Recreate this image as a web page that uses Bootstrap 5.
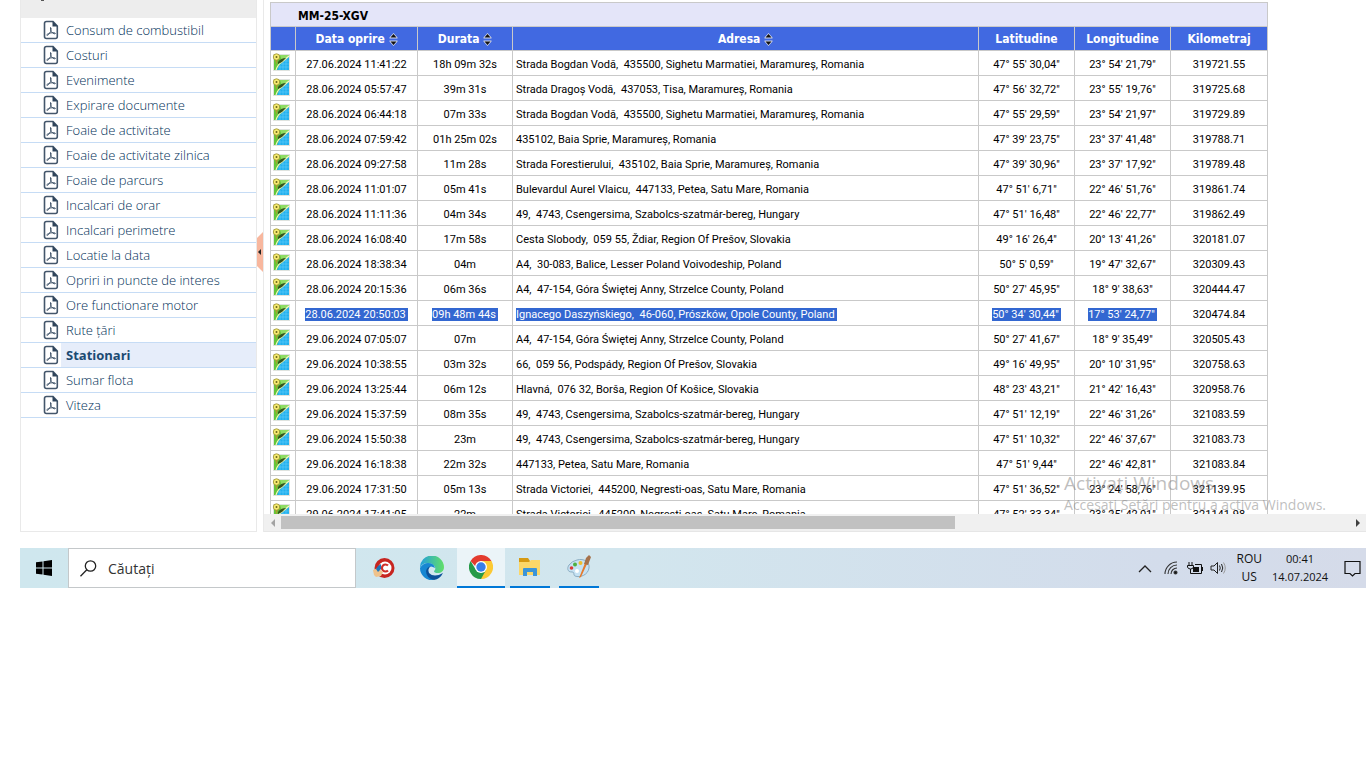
<!DOCTYPE html>
<html lang="ro">
<head>
<meta charset="utf-8">
<meta name="viewport" content="width=device-width, initial-scale=1">
<title>Stationari</title>
<link href="https://cdn.jsdelivr.net/npm/bootstrap@5.3.0/dist/css/bootstrap.min.css" rel="stylesheet">
<style>
body{font-family:"Open Sans","Noto Sans",sans-serif;font-size:13px;background:#fff;overflow-x:hidden}
.workspace{height:532px;padding-left:20px}
.sidebar{width:237px;border:1px solid #e9e9e9;border-top:0}
.side-head{height:18px;background:#ededed;padding-left:20px}
.side-head i{display:block;width:3px;height:1px;background:#555}
.reports a{display:flex;align-items:stretch;height:25px;border-bottom:1px solid #c6dcf5;color:#003058;text-decoration:none;line-height:24px;padding-left:22px;font-weight:300}
.reports svg{width:16px;height:20px;margin-top:2px;flex:none}
.reports span{flex:1;margin-left:2px;padding-left:5px}
.reports .current span{background:#e6edfa;font-weight:700;color:#1b4a72}
.splitter{width:7px;border-right:1px solid #e9e9e9;padding-top:232px}
.splitter button{display:block;border:0;padding:0;background:none;width:6px;height:40px}
.splitter svg{display:block}
.viewport{overflow:hidden;min-height:0;padding:2px 0 0 6px}
.stops{font-family:Roboto,"Liberation Sans",sans-serif;font-size:11px;line-height:14px;border-collapse:collapse;table-layout:fixed;width:998px;color:#000;text-align:center;white-space:pre}
.stops th,.stops td{border:1px solid #c9c9c9;padding:0;height:25px;vertical-align:middle}
.stops td{padding-top:3px}
.stops td:first-child{padding-top:0}
.stops thead th{height:24px;font-family:"DejaVu Sans Condensed","DejaVu Sans",sans-serif;font-size:12px}
.stops .vehicle th{background:#e4e5f9;text-align:left;padding:2px 0 0 27px}
.stops .heads th{background:#4169e1;color:#fff;text-align:center}
.stops td:nth-child(5n+4){text-align:left;padding-left:3px}
.stops td svg{display:block;margin-left:1px;margin-bottom:3px}
.stops .picked{background:#3367d1;color:#fff;padding:0 2px 0 0}
.hbar{height:18px;background:#f0f0f0;border-bottom:1px solid #e6e6e6}
.hbar button{border:0;background:none;padding:0;width:17px;height:17px;display:flex;align-items:center;justify-content:center}
.hbar .thumb{width:63.1%;height:13px;background:#c1c1c1;margin-top:2px}
.notice{position:absolute;right:40px;bottom:17px;color:rgba(125,125,125,.5);pointer-events:none;white-space:nowrap}
.notice .big{font-size:19px;line-height:24px}
.notice .sub{font-size:14px;line-height:20px}
.taskbar{margin:16px 0 0 20px;height:40px;background:linear-gradient(90deg,#cfe7ee,#d2e6ee 45%,#d3dceb 85%,#d5dbe9);color:#111}
.taskbar button{border:0;background:none;padding:0;display:flex;align-items:center;justify-content:center;height:40px;color:#111}
.start{width:48px}
.finder{width:288px;border:1px solid #c4c8ca;background:#fff;height:40px;padding-left:11px}
.finder input{border:0;outline:0;background:none;font-size:14px;color:#333;width:200px;padding:0;margin-left:11px}
.finder input::placeholder{color:#333;opacity:1}
.app{width:48px}
.taskbar .open{border-bottom:2px solid #0078d7;width:40px}
.taskbar .front{width:48px;margin-left:1px;background:#ebf4f8}
.tray{font-size:12px;line-height:18px;text-align:center}
.clock{width:56px;font-size:11px}
</style>
</head>
<body>
<svg width="0" height="0" class="position-absolute" aria-hidden="true">
<defs>
<symbol id="pdf" viewBox="0 0 16 20"><path d="M3.500 1.500H10L14.300 6V16.500Q14.300 18.500 12.500 18.500H3.500Q1.500 18.500 1.500 16.500V3.500Q1.500 1.500 3.500 1.500Z" fill="#fff" stroke="#43566b" stroke-width="1.600"/><path d="M9.500 1V6.500H15Z" fill="#2f445b"/><path d="M7.500 7.500C8.500 7.500 8 10 7.500 11.500C6.500 14 4.500 16 3.800 15.200C3.500 13.800 8.500 12.300 11.500 12.800C13 13.200 12.500 14.300 11 13.700C9 13 7 10.500 7.500 7.500Z" fill="none" stroke="#43566b"/></symbol>
<symbol id="map" viewBox="0 0 18 18"><path d="M1 1H18V18H1Z" fill="#dfe3df"/><path d="M2 2H17V17H2Z" fill="#62c63a"/><path d="M8 2H17V5L10 8Z" fill="#8fdc63"/><path d="M17 4V17H5Q7 11 12 8Z" fill="#22b0ee"/><path d="M8 17V12M11 17V9M14 17V6M6 14H17M9 11H17M12 8H17" stroke="#6fd2fa" stroke-width=".5"/><path d="M4 17Q6 11 10 9L17 3" fill="none" stroke="#f2f7c9" stroke-width="1.200"/><path d="M6 9Q9 5 14 5Q11 9 6 11Z" fill="#35531d"/><path d="M4.500 12L3 6H6Z" fill="#a99e32"/><circle cx="4.500" cy="4" r="3.200" fill="#f6ec70" stroke="#9a8f30" stroke-width=".8"/><circle cx="4.500" cy="4" r="1" fill="#6b641c"/></symbol>
<symbol id="sort" viewBox="0 0 9 13"><path d="M4.500 0L8.500 4.500V5.500H.5V4.500ZM4.500 13L.5 8.500V7.500H8.500V8.500Z" fill="#d3d8ea"/><path d="M4.500 1L7.500 4.500H1.500ZM4.500 12L1.500 8.500H7.500Z" fill="#111"/></symbol>
</defs>
</svg>

<div class="workspace d-flex">
<nav class="sidebar flex-shrink-0" aria-label="Rapoarte">
<div class="side-head"><i></i></div>
<div class="reports">
<a href="#"><svg><use href="#pdf"/></svg><span>Consum de combustibil</span></a>
<a href="#"><svg><use href="#pdf"/></svg><span>Costuri</span></a>
<a href="#"><svg><use href="#pdf"/></svg><span>Evenimente</span></a>
<a href="#"><svg><use href="#pdf"/></svg><span>Expirare documente</span></a>
<a href="#"><svg><use href="#pdf"/></svg><span>Foaie de activitate</span></a>
<a href="#"><svg><use href="#pdf"/></svg><span>Foaie de activitate zilnica</span></a>
<a href="#"><svg><use href="#pdf"/></svg><span>Foaie de parcurs</span></a>
<a href="#"><svg><use href="#pdf"/></svg><span>Incalcari de orar</span></a>
<a href="#"><svg><use href="#pdf"/></svg><span>Incalcari perimetre</span></a>
<a href="#"><svg><use href="#pdf"/></svg><span>Locatie la data</span></a>
<a href="#"><svg><use href="#pdf"/></svg><span>Opriri in puncte de interes</span></a>
<a href="#"><svg><use href="#pdf"/></svg><span>Ore functionare motor</span></a>
<a href="#"><svg><use href="#pdf"/></svg><span>Rute țări</span></a>
<a href="#" class="current"><svg><use href="#pdf"/></svg><span>Stationari</span></a>
<a href="#"><svg><use href="#pdf"/></svg><span>Sumar flota</span></a>
<a href="#"><svg><use href="#pdf"/></svg><span>Viteza</span></a>
</div>
</nav>
<div class="splitter flex-shrink-0"><button type="button" aria-label="Ascunde"><svg width="6" height="40"><path d="M0 0L6 6V34L0 40Z" fill="#f8b79e" transform="matrix(-1 0 0 1 6 0)"/><path d="M4 17V23L1 20Z" fill="#222"/></svg></button></div>
<main class="flex-fill d-flex flex-column position-relative overflow-hidden">
<div class="viewport flex-grow-1">
<table class="stops">
<colgroup><col style="width:25px"><col style="width:122px"><col style="width:95px"><col style="width:466px"><col style="width:96px"><col style="width:96px"><col style="width:97px"></colgroup>
<thead>
<tr class="vehicle"><th colspan="7">MM-25-XGV</th></tr>
<tr class="heads"><th></th><th>Data oprire <svg width="9" height="13"><use href="#sort"/></svg></th><th>Durata <svg width="9" height="13"><use href="#sort"/></svg></th><th>Adresa <svg width="9" height="13"><use href="#sort"/></svg></th><th>Latitudine</th><th>Longitudine</th><th>Kilometraj</th></tr>
</thead>
<tbody id="rows"></tbody>
</table>
</div>
<div class="hbar d-flex flex-shrink-0"><button type="button" aria-label="Stânga"><svg width="6" height="8"><path d="M5 0V8L1 4Z" fill="#a3a3a3"/></svg></button><div class="flex-grow-1"><div class="thumb"></div></div><button type="button" aria-label="Dreapta"><svg width="6" height="8"><path d="M1 0V8L5 4Z" fill="#404040"/></svg></button></div>
<div class="notice"><div class="big">Activați Windows</div><div class="sub">Accesați Setări pentru a activa Windows.</div></div>
</main>
</div>

<footer class="taskbar d-flex">
<button type="button" class="start" aria-label="Start"><svg width="16" height="16"><path d="M0 2.300L6.500 1.400V7.500H0ZM7.500 1.200L16 0V7.500H7.500ZM0 8.500H6.500V14.600L0 13.700ZM7.500 8.500H16V16L7.500 14.800Z"/></svg></button>
<label class="finder d-flex align-items-center"><svg width="17" height="17" fill="none" stroke="#222" stroke-width="1.300"><circle cx="10.500" cy="6" r="5.200"/><path d="M6.800 9.800L.5 16.200"/></svg><input type="search" placeholder="Căutați" aria-label="Căutați"></label>
<div class="d-flex ps-1">
<button type="button" class="app" aria-label="CCleaner"><svg width="22" height="22" viewBox="0 0 22 22"><circle cx="11.500" cy="11" r="10" fill="#c72520"/><circle cx="12" cy="11" r="6.500" fill="#fff"/><path d="M15 8.600A3.500 3.500 0 1 0 15 13.400" fill="none" stroke="#cf302a" stroke-width="2.200"/><path d="M0 13L5 11L10 15L8 19L3 20L1 18Z" fill="#efc28b"/><path d="M5 9L8 7V12L5 15L3 12Z" fill="#1e77bd"/></svg></button>
<button type="button" class="app" aria-label="Edge"><svg width="24" height="24" viewBox="0 0 24 24"><defs><linearGradient id="ea"><stop stop-color="#239fdd"/><stop offset="1" stop-color="#62df67"/></linearGradient></defs><path d="M0 12A12 12 0 0 1 24 11C24 15 21 17 18 17Q14 17 14 15Q16 14 15 11Q13 7 8 7Q2 7 0 12Z" fill="url(#ea)"/><path d="M0 12Q3 7 8 7Q14 7 15 12Q9 8 8 14Q8 19 14 24A12 12 0 0 1 0 12Z" fill="#1687d2"/><path d="M11 10Q7 13 9 17Q14 22 23 17Q20 23 14 24Q6 22 6 15Q7 11 11 10Z" fill="#0c5199"/></svg></button>
<button type="button" class="open front" aria-label="Chrome"><svg width="24" height="24" viewBox="0 0 24 24"><path d="M12 12L22.400 6A12 12 0 0 1 12 24Z" fill="#fcc934"/><path d="M12 12L17 15L12 24A12 12 0 0 1 1.600 6L7 15Z" fill="#269a48"/><path d="M12 6H22.400V12H12Z" fill="#fcc934"/><path d="M1.600 6A12 12 0 0 1 22.400 6H12L7 12Z" fill="#e33b2e"/><circle cx="12" cy="12" r="6" fill="#fff"/><circle cx="12" cy="12" r="4.700" fill="#377eea"/></svg></button>
<button type="button" class="open" style="margin-left:5px" aria-label="Explorer"><svg width="22" height="20" viewBox="0 0 22 20"><path d="M0 1H9L11 4V8H0Z" fill="#d69a12"/><path d="M0 5H10L12 3H21V18H0Z" fill="#fbd768"/><path d="M4 19V12Q4 11 5 11H17Q18 11 18 12V19H14V15H8V19Z" fill="#3b95d8"/></svg></button>
<button type="button" class="open" style="margin-left:9px" aria-label="Paint"><svg width="24" height="24" viewBox="0 0 24 24"><path d="M10 5C17 3 23 7 22 13C21 20 13 23 8 21C6 20 8 17 5 17C0 17 0 13 2 10Q5 6 10 5Z" fill="#c6e2f3" stroke="#8badc2"/><circle cx="4.500" cy="13" r="1.800" fill="#dd3838"/><circle cx="8" cy="9.500" r="2" fill="#4eaf42"/><circle cx="13.500" cy="8" r="2" fill="#efbd2d"/><circle cx="10" cy="16" r="2" fill="#fff"/><path d="M12 23L18 8L20 9L14 22Z" fill="#e47a2d"/><path d="M17 9L19 3L22 0L24 2L21 10Z" fill="#a5714a"/></svg></button>
</div>
<div class="tray ms-auto d-flex align-items-center">
<button type="button" aria-label="Pictograme ascunse"><svg width="14" height="9" fill="none" stroke="#222" stroke-width="1.300"><path d="M1 8L7 2L13 8"/></svg></button>
<svg class="me-1" style="margin-left:12px" width="15" height="14" fill="none" stroke="#333" stroke-width="1.100"><path d="M1 13A12 12 0 0 1 13 1M4 13A9 9 0 0 1 13 4M7 13A6 6 0 0 1 13 7" /><circle cx="11.500" cy="11.500" r="1.500" fill="#111"/></svg>
<svg class="ms-1" width="17" height="13" fill="none" stroke="#111"><path d="M2 0V3M5 0V3M.5 3.500H6.500V5Q6 7 3.500 7Q1 7 .5 5ZM3.500 7V11.500H14.500V2.500H8M15.500 5V9"/><path d="M6 5H12V10H6Z" fill="#111" stroke="none"/></svg>
<svg style="margin-left:6px" width="18" height="14" fill="none" stroke="#222"><path d="M1 5H4L7.500 1.500V12.500L4 9H1ZM9.500 4.500Q11 7 9.500 9.500M11.500 3Q14 7 11.500 11"/><path d="M13.500 1.500Q17 7 13.500 12.500" stroke="#999"/></svg>
<div style="margin-left:9px">ROU<br>US</div>
<div class="clock" style="margin-left:10px">00:41<br>14.07.2024</div>
<button type="button" style="margin:0 5px 0 16px" aria-label="Notificări"><svg width="17" height="17" fill="none" stroke="#111" stroke-width="1.200"><path d="M1 1.500H16V13.500H11L8.500 16L6 13.500H1Z"/></svg></button>
</div>
</footer>

<script>
const stops = [
["27.06.2024 11:41:22","18h 09m 32s","Strada Bogdan Vodă,  435500, Sighetu Marmatiei, Maramureș, Romania","47° 55' 30,04\"","23° 54' 21,79\"","319721.55"],
["28.06.2024 05:57:47","39m 31s","Strada Dragoș Vodă,  437053, Tisa, Maramureș, Romania","47° 56' 32,72\"","23° 55' 19,76\"","319725.68"],
["28.06.2024 06:44:18","07m 33s","Strada Bogdan Vodă,  435500, Sighetu Marmatiei, Maramureș, Romania","47° 55' 29,59\"","23° 54' 21,97\"","319729.89"],
["28.06.2024 07:59:42","01h 25m 02s","435102, Baia Sprie, Maramureș, Romania","47° 39' 23,75\"","23° 37' 41,48\"","319788.71"],
["28.06.2024 09:27:58","11m 28s","Strada Forestierului,  435102, Baia Sprie, Maramureș, Romania","47° 39' 30,96\"","23° 37' 17,92\"","319789.48"],
["28.06.2024 11:01:07","05m 41s","Bulevardul Aurel Vlaicu,  447133, Petea, Satu Mare, Romania","47° 51' 6,71\"","22° 46' 51,76\"","319861.74"],
["28.06.2024 11:11:36","04m 34s","49,  4743, Csengersima, Szabolcs-szatmár-bereg, Hungary","47° 51' 16,48\"","22° 46' 22,77\"","319862.49"],
["28.06.2024 16:08:40","17m 58s","Cesta Slobody,  059 55, Ždiar, Region Of Prešov, Slovakia","49° 16' 26,4\"","20° 13' 41,26\"","320181.07"],
["28.06.2024 18:38:34","04m","A4,  30-083, Balice, Lesser Poland Voivodeship, Poland","50° 5' 0,59\"","19° 47' 32,67\"","320309.43"],
["28.06.2024 20:15:36","06m 36s","A4,  47-154, Góra Świętej Anny, Strzelce County, Poland","50° 27' 45,95\"","18° 9' 38,63\"","320444.47"],
["28.06.2024 20:50:03","09h 48m 44s","Ignacego Daszyńskiego,  46-060, Prószków, Opole County, Poland","50° 34' 30,44\"","17° 53' 24,77\"","320474.84"],
["29.06.2024 07:05:07","07m","A4,  47-154, Góra Świętej Anny, Strzelce County, Poland","50° 27' 41,67\"","18° 9' 35,49\"","320505.43"],
["29.06.2024 10:38:55","03m 32s","66,  059 56, Podspády, Region Of Prešov, Slovakia","49° 16' 49,95\"","20° 10' 31,95\"","320758.63"],
["29.06.2024 13:25:44","06m 12s","Hlavná,  076 32, Borša, Region Of Košice, Slovakia","48° 23' 43,21\"","21° 42' 16,43\"","320958.76"],
["29.06.2024 15:37:59","08m 35s","49,  4743, Csengersima, Szabolcs-szatmár-bereg, Hungary","47° 51' 12,19\"","22° 46' 31,26\"","321083.59"],
["29.06.2024 15:50:38","23m","49,  4743, Csengersima, Szabolcs-szatmár-bereg, Hungary","47° 51' 10,32\"","22° 46' 37,67\"","321083.73"],
["29.06.2024 16:18:38","22m 32s","447133, Petea, Satu Mare, Romania","47° 51' 9,44\"","22° 46' 42,81\"","321083.84"],
["29.06.2024 17:31:50","05m 13s","Strada Victoriei,  445200, Negresti-oas, Satu Mare, Romania","47° 51' 36,52\"","23° 24' 58,76\"","321139.95"],
["29.06.2024 17:41:05","22m","Strada Victoriei,  445200, Negresti-oas, Satu Mare, Romania","47° 52' 33,34\"","23° 25' 42,01\"","321141.98"]
];
const picked = 10;
document.getElementById("rows").innerHTML = stops.map((r, i) =>
  '<tr><td><svg width="18" height="18"><use href="#map"/></svg></td>' +
  r.map((v, c) => "<td>" + (i === picked && c < 5 ? '<span class="picked">' + v + "</span>" : v) + "</td>").join("") + "</tr>").join("");
</script>
<script src="https://cdn.jsdelivr.net/npm/bootstrap@5.3.0/dist/js/bootstrap.bundle.min.js"></script>
</body>
</html>
